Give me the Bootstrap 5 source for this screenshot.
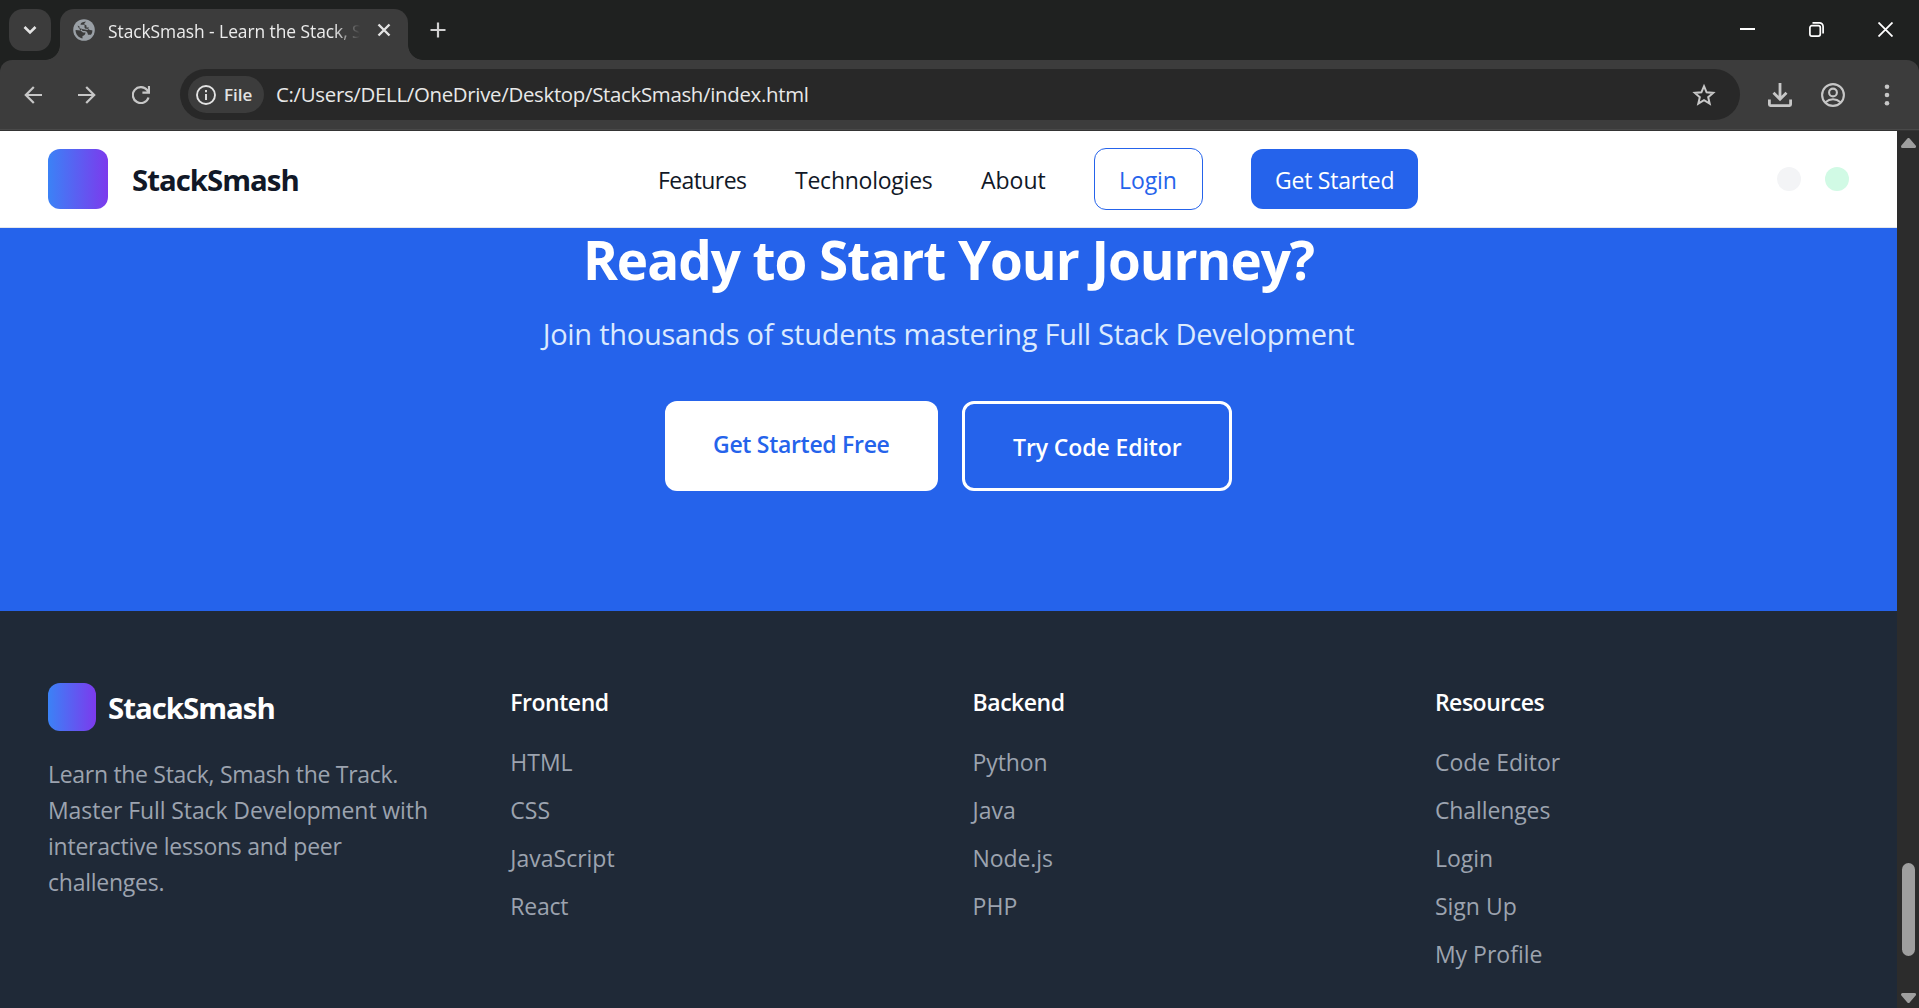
<!DOCTYPE html>
<html lang="en">
<head>
<meta charset="utf-8">
<title>StackSmash</title>
<link href="https://cdn.jsdelivr.net/npm/bootstrap@5.3.0/dist/css/bootstrap.min.css" rel="stylesheet">
<style>
html,body{height:100%;overflow:hidden}
body{font-family:"Open Sans","Noto Sans",sans-serif;font-size:23px;line-height:36px;background:#1f2937;color:#111827}
a{text-decoration:none;color:inherit}
svg{display:block;flex:none}
.tabstrip{height:60px;background:#1f2120;padding:9px 0 0 9px}
.tablist{width:42px;height:42px;border-radius:14px;background:#3c3c3c}
.tab{width:348px;height:51px;margin-left:9px;background:#3c3c3c;border-radius:14px 14px 0 0;padding:0 17px 9px 13px}
.tab::before,.tab::after{content:"";position:absolute;bottom:0;width:15px;height:15px}
.tab::before{left:-15px;background:radial-gradient(circle at 0 0,transparent 14.5px,#3c3c3c 15.2px)}
.tab::after{right:-15px;background:radial-gradient(circle at 100% 0,transparent 14.5px,#3c3c3c 15.2px)}
.tabtitle{width:256px;margin-left:13px;font-size:17.4px;line-height:24px;color:#ececec;overflow:hidden;white-space:nowrap;-webkit-mask-image:linear-gradient(90deg,#000 226px,transparent 252px);padding-top:2px;letter-spacing:-.05px}
.plus{margin:13px 0 0 22px}
.winctl{gap:54px;padding:13px 26px 0 0}
.toolwrap{background:#1f2120;height:71px}
.toolbar{height:71px;background:#3c3c3c;border-radius:12px 12px 0 0;padding:9px 0 0 24px;box-shadow:inset 0 -1px #343434,inset 0 -2px #494949}
.tools{height:52px}
.omni{width:1560px;height:51px;border-radius:26px;background:#282828;padding-left:8px;margin-left:30px}
.chip{width:76px;height:37px;border-radius:19px;background:#3c3c3c;padding-left:8px;color:#e3e3e3;font-size:17px;font-weight:600}
.url{font-size:20.4px;color:#e8e8e8;margin-left:12px;width:1416px;white-space:nowrap;letter-spacing:-.3px;padding-bottom:2px}
.viewport{height:877px}
.page{width:1897px}
.sitenav{height:97px;background:#fff;border-bottom:1px solid #e5e7eb;padding:0 48px}
.logo{background:linear-gradient(90deg,#3b82f6,#7c3aed);border-radius:12px;flex:none}
.logo-lg{width:60px;height:60px}
.logo-sm{width:48px;height:48px}
.brandname{font-size:29.4px;font-weight:700;white-space:nowrap;line-height:36px;letter-spacing:-1px;padding-top:2px}
.links{gap:48px}
.links a{white-space:nowrap;flex:none;display:block}
.plain{padding-top:2px}
.b-login{width:109px;height:62px;border:1px solid #2563eb;border-radius:12px;color:#2563eb;padding:13px 0 0 24px}
.b-start{width:167px;height:60px;border-radius:12px;background:#2563eb;color:#fff;padding:13px 0 0 24px}
.dot{width:24px;height:24px;border-radius:50%}
.hero{height:383px;background:#2563eb;text-align:center}
.hero h2{font-size:53px;font-weight:700;line-height:60px;color:#fff;margin:2px 0 0;white-space:nowrap;letter-spacing:-1.02px}
.hero p{font-size:29px;line-height:45px;color:#dbeafe;margin:21px 0 0;white-space:nowrap;letter-spacing:-.27px}
.cta{gap:24px;margin-top:45px}
.cta a{height:90px;border-radius:12px;font-weight:600;text-align:left;white-space:nowrap}
.cta-a{width:273px;background:#fff;color:#2563eb;padding:25px 0 0 48px}
.cta-b{width:270px;border:3px solid #fff;color:#fff;padding:25px 0 0 48px}
.foot{height:397px;background:#1f2937;padding:72px 48px 0;color:#9ca3af}
.cols{display:grid;grid-template-columns:414.5px 414.5px 414.5px 414.5px;column-gap:47.8px}
.cols h4{font-size:23px;line-height:36px;font-weight:600;color:#fff;margin:1px 0 24px;letter-spacing:-.47px}
.cols li{height:48px;white-space:nowrap}
.about{margin:25px 0 0;white-space:nowrap}
.t1{letter-spacing:-.1px}
.t2{letter-spacing:-.24px}
.t3{letter-spacing:-.3px}
.t6{letter-spacing:-.6px}
.sb{width:22px;background:#2c2c2c;padding:7px 0 4px 4px}
.thumb{width:13px;height:93px;border-radius:7px;background:#9f9f9f;margin:715px 0 37px 1px}
</style>
<script src="https://cdn.jsdelivr.net/npm/bootstrap@5.3.0/dist/js/bootstrap.bundle.min.js"></script>
</head>
<body>
<header>
 <div class="tabstrip d-flex">
  <div class="tablist d-flex align-items-center justify-content-center"><svg width="14" height="10" viewBox="0 0 14 10" fill="none" stroke="#e3e3e3" stroke-width="2.6"><path d="M1.5 2 7 7.5 12.5 2"/></svg></div>
  <div class="tab position-relative d-flex align-items-center">
   <svg width="22" height="22" viewBox="0 0 22 22"><circle cx="11" cy="11" r="10.8" fill="#9aa0a6"/><path d="M13 2.500C9.500 2.800 7.500 4 7.500 5.800H11.500V8.300C11.500 9.500 12.500 9.800 14 9.800 16 9.800 16 11.500 19.300 11.300 19.500 13 19 14.500 18 15.800H15C14.500 13 13.500 12 11.500 12H9.500L8.500 9.500H6.500V7.500L4.500 6.500C5 8 6 9 7.500 11.500L2.600 11C2.500 15 5 18.500 9.500 19.400V17C11.500 16.500 12.500 15 12.500 13.500H10L7.500 11.500 9 10 14.500 11 16 8.500H13.500V6.500L11 5z" fill="#3c3c3c"/></svg>
   <div class="tabtitle">StackSmash - Learn the Stack, S</div>
   <svg class="ms-auto" width="14" height="14" viewBox="0 0 14 14" stroke="#e3e3e3" stroke-width="2.4"><path d="M1.500 1.500 12.500 12.500M12.500 1.500 1.500 12.500"/></svg>
  </div>
  <svg class="plus" width="16" height="16" viewBox="0 0 16 16" stroke="#d0d0d0" stroke-width="2.200"><path d="M8 .5v15M.5 8h15"/></svg>
  <div class="winctl d-flex ms-auto">
   <svg width="15" height="15" viewBox="0 0 15 15"><path d="M0 6h15v2H0z" fill="#fff"/></svg>
   <svg width="15" height="15" viewBox="0 0 15 15" fill="none" stroke="#fff" stroke-width="1.700"><rect x=".9" y="3.700" width="10.400" height="10.400" rx="2"/><path d="M3.500.9H10.500a3.600 3.600 0 0 1 3.600 3.600V11.500"/></svg>
   <svg width="15" height="15" viewBox="0 0 15 15" stroke="#fff" stroke-width="1.800"><path d="M.5.5l14 14M14.500.5l-14 14"/></svg>
  </div>
 </div>
 <div class="toolwrap"><div class="toolbar d-flex">
  <div class="tools d-flex align-items-center" style="gap:36px">
   <svg width="18" height="18" viewBox="0 0 18 18" fill="none" stroke="#c7c7c7" stroke-width="2.200"><path d="M18 9H2M9.800 1 1.800 9l8 8"/></svg>
   <svg width="18" height="18" viewBox="0 0 18 18" fill="none" stroke="#c7c7c7" stroke-width="2.200"><path d="M0 9h16M8.200 1l8 8-8 8"/></svg>
   <svg width="18" height="18" viewBox="0 0 18 18" fill="none" stroke="#c7c7c7" stroke-width="2.200"><path d="M16.500 11.500A8 8 0 1 1 15.200 4.200L17 6.200M17 0v6.600h-6.600"/></svg>
  </div>
  <div class="omni d-flex align-items-center">
   <div class="chip d-flex align-items-center"><svg width="20" height="20" viewBox="0 0 20 20" fill="none" stroke="#e3e3e3" stroke-width="1.900"><circle cx="10" cy="10" r="9"/><path d="M10 9v6M10 5v2.200"/></svg><span class="ms-2">File</span></div>
   <div class="url">C:/Users/DELL/OneDrive/Desktop/StackSmash/index.html</div>
   <svg width="24" height="24" viewBox="0 0 24 24" fill="none" stroke="#c7c7c7" stroke-width="2"><path d="M12 3.200 14.600 9.300 21.200 9.900 16.200 14.200 17.700 20.700 12 17.200 6.300 20.700 7.800 14.200 2.800 9.900 9.400 9.300z"/></svg>
  </div>
  <div class="tools d-flex align-items-center" style="margin-left:28px">
   <svg width="24" height="24" viewBox="0 0 24 24" fill="none" stroke="#c7c7c7" stroke-width="2.800"><path d="M12 0v16M5.500 9.800l6.500 6.500 6.500-6.500M1.400 16.500v5.100q0 1 1 1h19.200q1 0 1-1v-5.100"/></svg>
   <svg style="margin-left:29px" width="24" height="24" viewBox="0 0 24 24" fill="none" stroke="#c7c7c7" stroke-width="2.100"><circle cx="12" cy="12" r="10.900"/><circle cx="12" cy="9.500" r="3.900"/><path d="M4.500 19.200q3.300-2.900 7.500-2.900t7.500 2.900"/></svg>
   <svg style="margin-left:39px" width="6" height="24" viewBox="0 0 6 24" fill="#c7c7c7"><circle cx="3" cy="3.700" r="2.300"/><circle cx="3" cy="12" r="2.300"/><circle cx="3" cy="20.200" r="2.300"/></svg>
  </div>
 </div></div>
</header>
<div class="viewport d-flex">
 <main class="page">
  <nav class="sitenav d-flex align-items-center justify-content-between">
   <a href="#" class="d-flex align-items-center" style="gap:24px;width:251px"><span class="logo logo-lg"></span><span class="brandname">StackSmash</span></a>
   <div class="links d-flex align-items-center">
    <a href="#" class="plain t6" style="width:89px">Features</a>
    <a href="#" class="plain t2" style="width:138px">Technologies</a>
    <a href="#" class="plain" style="width:65px">About</a>
    <a href="#" class="b-login t1">Login</a>
    <a href="#" class="b-start t2">Get Started</a>
   </div>
   <div class="d-flex" style="gap:24px"><span class="dot" style="background:#f3f4f6"></span><span class="dot" style="background:#d1fae5"></span></div>
  </nav>
  <section class="hero d-flex flex-column">
   <h2>Ready to Start Your Journey?</h2>
   <p>Join thousands of students mastering Full Stack Development</p>
   <div class="cta d-flex justify-content-center"><a href="#" class="cta-a t3">Get Started Free</a><a href="#" class="cta-b t1">Try Code Editor</a></div>
  </section>
  <footer class="foot"><div class="cols">
   <div><div class="d-flex align-items-center" style="gap:12px"><span class="logo logo-sm"></span><span class="brandname text-white">StackSmash</span></div>
    <p class="about"><span class="t3">Learn the Stack, Smash the Track.</span><br><span class="t1">Master Full Stack Development with</span><br><span class="t2">interactive lessons and peer</span><br><span class="t2">challenges.</span></p></div>
   <div><h4>Frontend</h4><ul class="list-unstyled"><li>HTML</li><li>CSS</li><li>JavaScript</li><li class="t2">React</li></ul></div>
   <div><h4>Backend</h4><ul class="list-unstyled"><li class="t1">Python</li><li>Java</li><li class="t1">Node.js</li><li>PHP</li></ul></div>
   <div><h4>Resources</h4><ul class="list-unstyled"><li>Code Editor</li><li class="t1">Challenges</li><li>Login</li><li>Sign Up</li><li>My Profile</li></ul></div>
  </div></footer>
 </main>
 <div class="sb">
  <svg width="15" height="10" viewBox="0 0 15 10"><path d="M7.500 1.500 13.500 8.500H1.500z" fill="#9f9f9f" stroke="#9f9f9f" stroke-width="3" stroke-linejoin="round"/></svg>
  <div class="thumb"></div>
  <svg width="15" height="10" viewBox="0 0 15 10"><path d="M7.500 8.500 13.500 1.500H1.500z" fill="#9f9f9f" stroke="#9f9f9f" stroke-width="3" stroke-linejoin="round"/></svg>
 </div>
</div>
</body>
</html>
